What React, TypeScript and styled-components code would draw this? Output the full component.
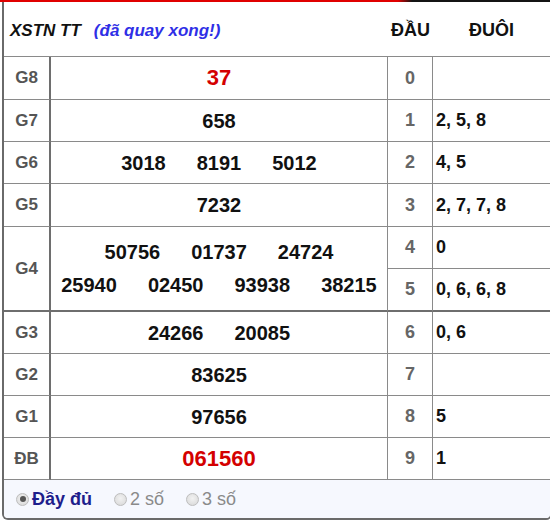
import React from "react";
import styled, { createGlobalStyle } from "styled-components";

const GlobalStyle = createGlobalStyle`
  html, body { margin: 0; padding: 0; background: #fff; overflow: hidden; }
  body { font-family: "Liberation Sans", Arial, sans-serif; }
`;

const TopStripe = styled.div`
  height: 2px;
  width: 100%;
  background: linear-gradient(to right, #e00000 0, #e00000 398px, #141414 412px, #141414 100%);
`;

const Frame = styled.div`
  margin-left: 2px;
  width: 546px;
  border-left: 2px solid #6a6a6a;
  border-right: 2px solid #6a6a6a;
  border-bottom: 2px solid #6a6a6a;
  border-radius: 0 0 6px 6px;
  overflow: hidden;
`;

const Grid = styled.div`
  display: grid;
  grid-template-columns: 47px 337px 45px 117px;
  grid-template-rows: 55px 43px 42px 42px 43px 42px 43px 42px 42px 42px 42px 38px;
`;

const Cell = styled.div<{ $thick?: boolean; $last?: boolean }>`
  box-sizing: border-box;
  display: flex;
  align-items: center;
  justify-content: center;
  border-bottom: ${(p) => (p.$thick ? "2px solid #6e6e6e" : "1px solid #8a8a8a")};
  border-right: ${(p) => (p.$last ? "none" : "1px solid #8a8a8a")};
  font-weight: bold;
`;

const Title = styled.div`
  grid-column: 1 / 3;
  box-sizing: border-box;
  display: flex;
  align-items: center;
  padding: 4px 0 0 6px;
  border-bottom: 1px solid #8a8a8a;
  font-size: 17px;
  font-weight: bold;
  font-style: italic;
  color: #111;
`;

const Status = styled.span`
  margin-left: 13px;
  color: #2f2fe6;
`;

const HeadCell = styled.div`
  box-sizing: border-box;
  display: flex;
  align-items: center;
  justify-content: center;
  padding-top: 3px;
  border-bottom: 1px solid #8a8a8a;
  font-size: 18px;
  font-weight: bold;
  color: #111;
`;

const LabelCell = styled(Cell)<{ $span?: number }>`
  grid-row: span ${(p) => p.$span ?? 1};
  border-right: 2px solid #6e6e6e;
  color: #555;
  font-size: 17px;
`;

const NumsCell = styled(Cell)<{ $span?: number }>`
  grid-row: span ${(p) => p.$span ?? 1};
  flex-direction: column;
  gap: 11px;
`;

const NumLine = styled.div`
  display: flex;
  justify-content: center;
  column-gap: 31px;
`;

const Num = styled.span<{ $special?: boolean }>`
  font-size: ${(p) => (p.$special ? "22px" : "20px")};
  line-height: 22px;
  color: ${(p) => (p.$special ? "#d40000" : "#111")};
`;

const HeadDigit = styled(Cell)`
  color: #666;
  font-size: 18px;
`;

const TailCell = styled(Cell)`
  justify-content: flex-start;
  padding-left: 3px;
  font-size: 18px;
  color: #111;
`;

const RadioBar = styled.div`
  grid-column: 1 / -1;
  display: flex;
  align-items: center;
  padding-left: 12px;
  background: #f6f8fe;
  font-size: 18px;
`;

const Option = styled.label`
  display: flex;
  align-items: center;
  margin-right: 22px;
`;

const Dot = styled.span<{ $on?: boolean }>`
  box-sizing: border-box;
  width: 13px;
  height: 13px;
  border-radius: 50%;
  border: 1px solid #bdbdbd;
  background: radial-gradient(circle at 50% 40%, #f2f2f2 0, #d6d6d6 100%);
  margin-right: 3px;
  display: flex;
  align-items: center;
  justify-content: center;
  &::after {
    content: "";
    display: ${(p) => (p.$on ? "block" : "none")};
    width: 6px;
    height: 6px;
    border-radius: 50%;
    background: #555;
  }
`;

const OptText = styled.span<{ $on?: boolean }>`
  color: ${(p) => (p.$on ? "#1e1e8c" : "#8a8a8a")};
  font-weight: ${(p) => (p.$on ? "bold" : "normal")};
`;

type Prize = { label: string; lines: string[][]; special?: boolean; span?: number };

const prizes: Prize[] = [
  { label: "G8", lines: [["37"]], special: true },
  { label: "G7", lines: [["658"]] },
  { label: "G6", lines: [["3018", "8191", "5012"]] },
  { label: "G5", lines: [["7232"]] },
  {
    label: "G4",
    lines: [
      ["50756", "01737", "24724"],
      ["25940", "02450", "93938", "38215"],
    ],
    span: 2,
  },
  { label: "G3", lines: [["24266", "20085"]] },
  { label: "G2", lines: [["83625"]] },
  { label: "G1", lines: [["97656"]] },
  { label: "ĐB", lines: [["061560"]], special: true },
];

const tails = ["", "2, 5, 8", "4, 5", "2, 7, 7, 8", "0", "0, 6, 6, 8", "0, 6", "", "5", "1"];

export default function App() {
  const cells: React.ReactNode[] = [];
  let d = 0;
  prizes.forEach((p) => {
    const span = p.span ?? 1;
    const thickG = p.label === "G4";
    cells.push(
      <LabelCell key={p.label + "l"} $span={span} $thick={thickG}>
        {p.label}
      </LabelCell>
    );
    cells.push(
      <NumsCell key={p.label + "n"} $span={span} $thick={thickG}>
        {p.lines.map((line, i) => (
          <NumLine key={i}>
            {line.map((n) => (
              <Num key={n} $special={p.special}>
                {n}
              </Num>
            ))}
          </NumLine>
        ))}
      </NumsCell>
    );
    for (let k = 0; k < span; k++) {
      const thick = d === 5;
      cells.push(
        <HeadDigit key={"h" + d} $thick={thick}>
          {d}
        </HeadDigit>
      );
      cells.push(
        <TailCell key={"t" + d} $thick={thick} $last>
          {tails[d]}
        </TailCell>
      );
      d++;
    }
  });

  return (
    <>
      <GlobalStyle />
      <TopStripe />
      <Frame>
        <Grid>
          <Title>
            XSTN TT<Status>(đã quay xong!)</Status>
          </Title>
          <HeadCell>ĐẦU</HeadCell>
          <HeadCell>ĐUÔI</HeadCell>
          {cells}
          <RadioBar>
            <Option>
              <Dot $on />
              <OptText $on>Đầy đủ</OptText>
            </Option>
            <Option>
              <Dot />
              <OptText>2 số</OptText>
            </Option>
            <Option>
              <Dot />
              <OptText>3 số</OptText>
            </Option>
          </RadioBar>
        </Grid>
      </Frame>
    </>
  );
}
